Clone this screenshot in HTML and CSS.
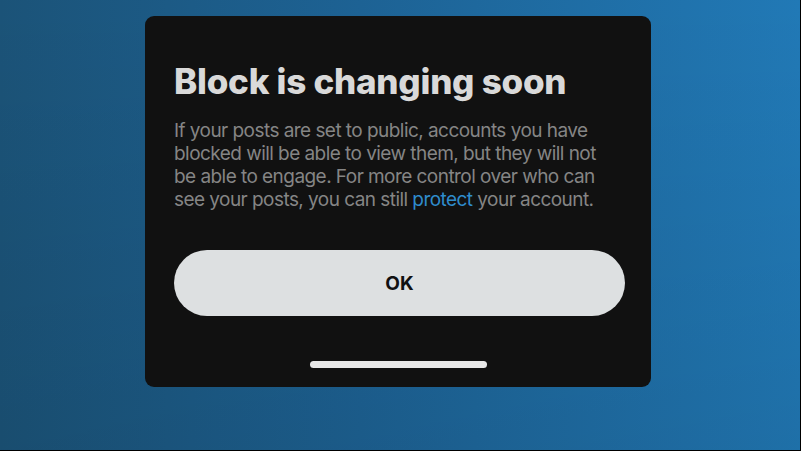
FILE: index.html
```html
<!DOCTYPE html>
<html lang="en">
<head>
<meta charset="utf-8">
<title>Block is changing soon</title>
<link rel="stylesheet" href="styles.css">
</head>
<body>
<main class="screen">
  <section class="dialog" role="dialog" aria-labelledby="dlg-title">
    <h1 id="dlg-title" class="title">Block is changing soon</h1>
    <p class="body">If your posts are set to public, accounts you have blocked will be able to view them, but they will not be able to engage. For more control over who can see your posts, you can still <a class="link" href="#">protect</a> your account.</p>
    <button class="ok" type="button">OK</button>
    <div class="home-indicator"></div>
  </section>
</main>
</body>
</html>
```

FILE: styles.css
```css
html {
  background: #000;
}
body {
  margin: 0;
  width: 800px;
  height: 450px;
  overflow: hidden;
}
.screen {
  width: 800px;
  height: 450px;
  display: flex;
  justify-content: center;
  align-items: flex-start;
  padding-top: 16px;
  box-sizing: border-box;
  background:
    linear-gradient(180deg, rgba(0,0,0,0) 0%, rgba(0,0,0,0.08) 100%),
    linear-gradient(90deg, #1b5378 0%, #1d6294 45%, #2179b6 100%);
}
.dialog {
  width: 506px;
  height: 371px;
  box-sizing: border-box;
  margin-left: -4px;
  background: #111111;
  border-radius: 9px;
  padding: 43px 26px 0 29px;
  display: flex;
  flex-direction: column;
  font-family: Inter, "Liberation Sans", sans-serif;
}
.title {
  margin: 0;
  font-size: 35px;
  line-height: 44px;
  font-weight: 800;
  color: #d9d9d9;
  letter-spacing: -0.25px;
}
.body {
  margin: 16px 0 0;
  max-width: 432px;
  font-size: 19px;
  line-height: 23px;
  color: #858585;
  font-weight: 400;
  letter-spacing: -0.55px;
}
.link {
  color: #2f8ccc;
  text-decoration: none;
}
.ok {
  margin-top: 39px;
  height: 66px;
  width: 451px;
  border: none;
  border-radius: 33px;
  background: #dde0e1;
  color: #111;
  font-family: Inter, "Liberation Sans", sans-serif;
  font-weight: 700;
  font-size: 19px;
  padding: 0;
}
.home-indicator {
  align-self: center;
  margin: 45px 0 0 -3px;
  width: 177px;
  height: 7px;
  border-radius: 4px;
  background: #e8e8e8;
}
```
